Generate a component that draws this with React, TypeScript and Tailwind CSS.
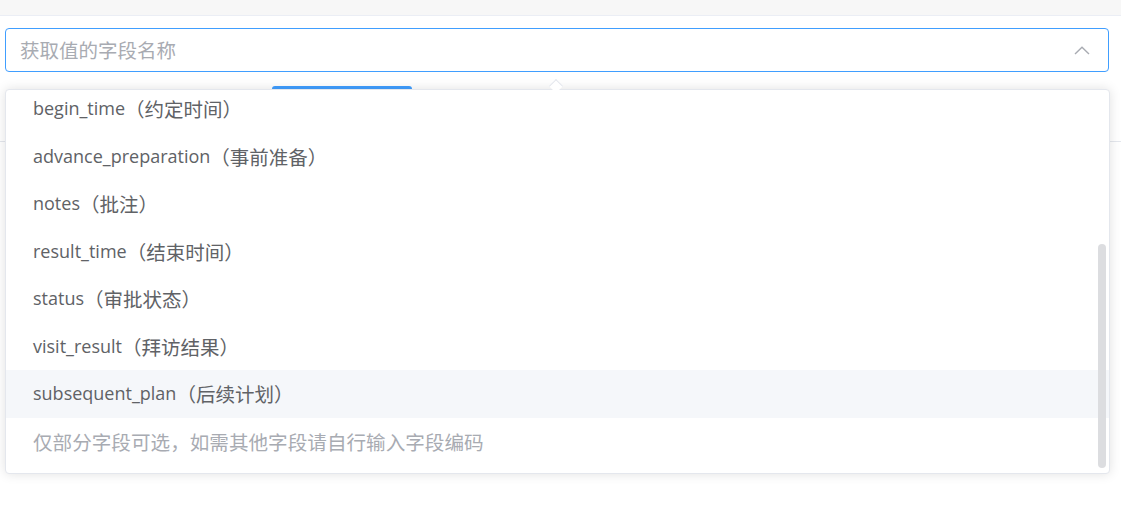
import React from 'react';

const options = [
  { code: 'begin_time', label: '（约定时间）' },
  { code: 'advance_preparation', label: '（事前准备）' },
  { code: 'notes', label: '（批注）' },
  { code: 'result_time', label: '（结束时间）' },
  { code: 'status', label: '（审批状态）' },
  { code: 'visit_result', label: '（拜访结果）' },
  { code: 'subsequent_plan', label: '（后续计划）' },
];

export default function App() {
  const hovered = 'subsequent_plan';

  return (
    <div className="relative h-[516px] overflow-hidden bg-white font-['Noto_Sans_CJK_SC',sans-serif]">
      {/* top strip */}
      <div className="h-[16px] border-b border-[#ebeef5] bg-[#f7f7f7]" />

      {/* select input */}
      <div className="px-[5px] pt-[12px]">
        <div className="flex h-[44px] w-[1104px] items-center rounded-[4px] border border-[#409eff] pl-[14px] pr-[18px]">
          <span className="flex-1 text-[19.5px] text-[#a8abb2]">获取值的字段名称</span>
          <svg width="16" height="9" viewBox="0 0 16 9" fill="none">
            <path d="M1 8 L8 1.2 L15 8" stroke="#a8abb2" strokeWidth="1.4" />
          </svg>
        </div>
      </div>

      {/* tabs behind */}
      <div className="mt-[14px] h-[56px] border-b border-[#e4e7ed]">
        <div className="ml-[272px] h-[3px] w-[140px] rounded-t-[3px] bg-[#409eff]" />
      </div>

      {/* dropdown */}
      <div className="absolute left-[5px] top-[89px] h-[385px] w-[1105px] rounded-[4px] border border-[#e4e7ed] bg-white shadow-[0_0_12px_rgba(0,0,0,0.12)]">
        <div className="absolute -top-[9px] left-[545px] z-10 h-[10px] w-[10px] rotate-45 border-l border-t border-[#e4e7ed] bg-white" />
        <div className="h-full overflow-hidden rounded-[4px]">
          <div className="-mt-[5px]">
            {options.map((opt) => (
              <div
                key={opt.code}
                className={`flex h-[47.5px] items-center pl-[27px] text-[#606266] ${
                  opt.code === hovered ? 'bg-[#f5f7fa]' : ''
                }`}
              >
                <span className="font-['Open_Sans',sans-serif] text-[18px]">{opt.code}</span>
                <span className="text-[19.5px]">{opt.label}</span>
              </div>
            ))}
            <div className="flex h-[47.5px] items-center pl-[27px] text-[19.6px] text-[#a8abb2]">
              仅部分字段可选，如需其他字段请自行输入字段编码
            </div>
          </div>
        </div>
        <div className="absolute right-[3px] top-[154px] h-[224px] w-[8px] rounded-full bg-[#dcdde0]" />
      </div>
    </div>
  );
}
